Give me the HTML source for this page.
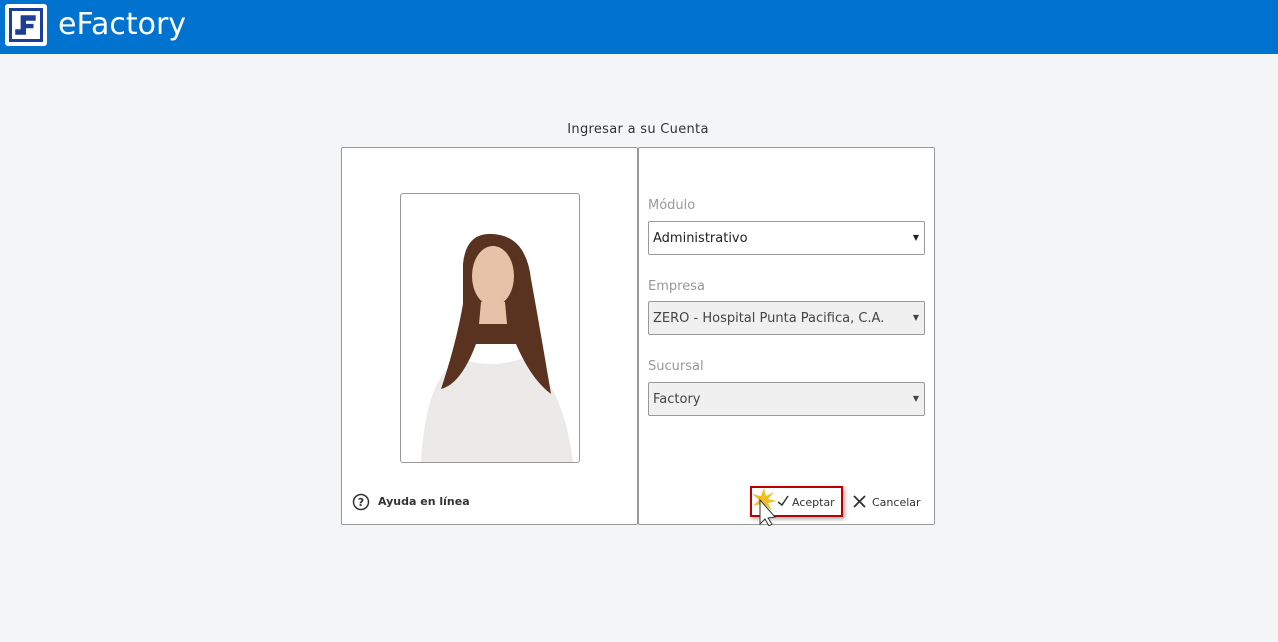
<!DOCTYPE html>
<html><head><style>
body{margin:0;width:1278px;height:642px;background:#f4f5f7;font-family:"DejaVu Sans","Liberation Sans",sans-serif;position:relative;overflow:hidden}
.top{position:absolute;left:0;top:0;width:1278px;height:54px;background:#0073d1}
.logo{position:absolute;left:5px;top:4px;width:42px;height:42px;background:#fff;border-radius:3px}
.logo .in{position:absolute;left:4px;top:4px;width:28px;height:28px;border:3px solid #1d3e96;background:#fff}
.title{position:absolute;left:58px;top:7px;color:#fff;font-size:30px}
.cap{position:absolute;left:0;width:1276px;top:122px;text-align:center;font-size:13px;color:#333;letter-spacing:.3px}
.box{position:absolute;top:147px;height:376px;background:#fff;border:1px solid #999;border-radius:2px}
.lbl{position:absolute;left:648px;font-size:13px;color:#999}
.sel{position:absolute;left:648px;width:277px;height:34px;border:1px solid #999;border-radius:2px;font-size:13px;color:#222;box-sizing:border-box;padding:9px 4px}
.sel:after{content:"▼";position:absolute;right:5px;top:11px;font-size:8px}
.photo{position:absolute;left:400px;top:193px;width:178px;height:268px;border:1px solid #999;border-radius:3px;background:#fff;overflow:hidden}
</style></head><body>
<div class="top"><div class="logo"><div class="in">
<svg width="28" height="28" viewBox="0 0 26 26"><path d="M8 4h14v5h-9v3h7v4h-7v6H3v-5h5z" fill="#1d3e96"/></svg></div></div>
<div class="title">eFactory</div></div>
<div class="cap">Ingresar a su Cuenta</div>
<div class="box" style="left:341px;width:295px"></div>
<div class="box" style="left:638px;width:295px"></div>
<div class="photo"><svg width="178" height="268">
<path d="M20 268 Q25 180 60 165 Q90 175 120 165 Q160 180 172 268Z" fill="#eceae8"/>
<path d="M62 70 Q65 38 92 40 Q125 42 130 85 Q140 140 150 200 Q130 185 115 150 L75 150 Q60 190 40 195 Q55 150 62 110 Z" fill="#5a3320"/>
<ellipse cx="92" cy="82" rx="21" ry="30" fill="#e8c2a8"/>
<path d="M80 108 L104 108 L106 130 L78 130Z" fill="#e8c2a8"/>
</svg></div>
<svg style="position:absolute;left:352px;top:493px" width="18" height="18"><circle cx="9" cy="9" r="7.5" fill="none" stroke="#333" stroke-width="1.5"/><text x="9" y="13" font-size="11" text-anchor="middle" font-weight="bold" fill="#333" font-family="DejaVu Sans">?</text></svg>
<div style="position:absolute;left:378px;top:495px;font-size:11px;font-weight:bold;color:#333">Ayuda en línea</div>
<div class="lbl" style="top:198px">Módulo</div>
<div class="sel" style="top:221px;background:#fff">Administrativo</div>
<div class="lbl" style="top:279px">Empresa</div>
<div class="sel" style="top:301px;background:#f0f0f0;color:#444">ZERO - Hospital Punta Pacifica, C.A.</div>
<div class="lbl" style="top:359px">Sucursal</div>
<div class="sel" style="top:382px;background:#f0f0f0;color:#444">Factory</div>
<div style="position:absolute;left:750px;top:486px;width:93px;height:31px;border:2px solid #b00;box-sizing:border-box;box-shadow:2px 2px 4px #aaa"></div>
<svg style="position:absolute;left:750px;top:486px" width="40" height="40"><path d="M14 2 L16 10 L24 6 L18 13 L27 15 L18 17 L22 25 L15 19 L12 27 L11 18 L3 20 L9 14 L2 8 L11 10Z" fill="#f0c020"/><path d="M10 14 L10 38 L15 33 L19 40 L22 38 L18 32 L25 31Z" fill="#fff" stroke="#333"/><path d="M28 16 L32 19 L38 10" stroke="#333" fill="none" stroke-width="1.5"/></svg>
<div style="position:absolute;left:792px;top:496px;font-size:11px;color:#333">Aceptar</div>
<svg style="position:absolute;left:852px;top:494px" width="15" height="15"><path d="M2 2L13 13M13 2L2 13" stroke="#333" stroke-width="1.8"/></svg>
<div style="position:absolute;left:872px;top:496px;font-size:11px;color:#333">Cancelar</div>
</body></html>
